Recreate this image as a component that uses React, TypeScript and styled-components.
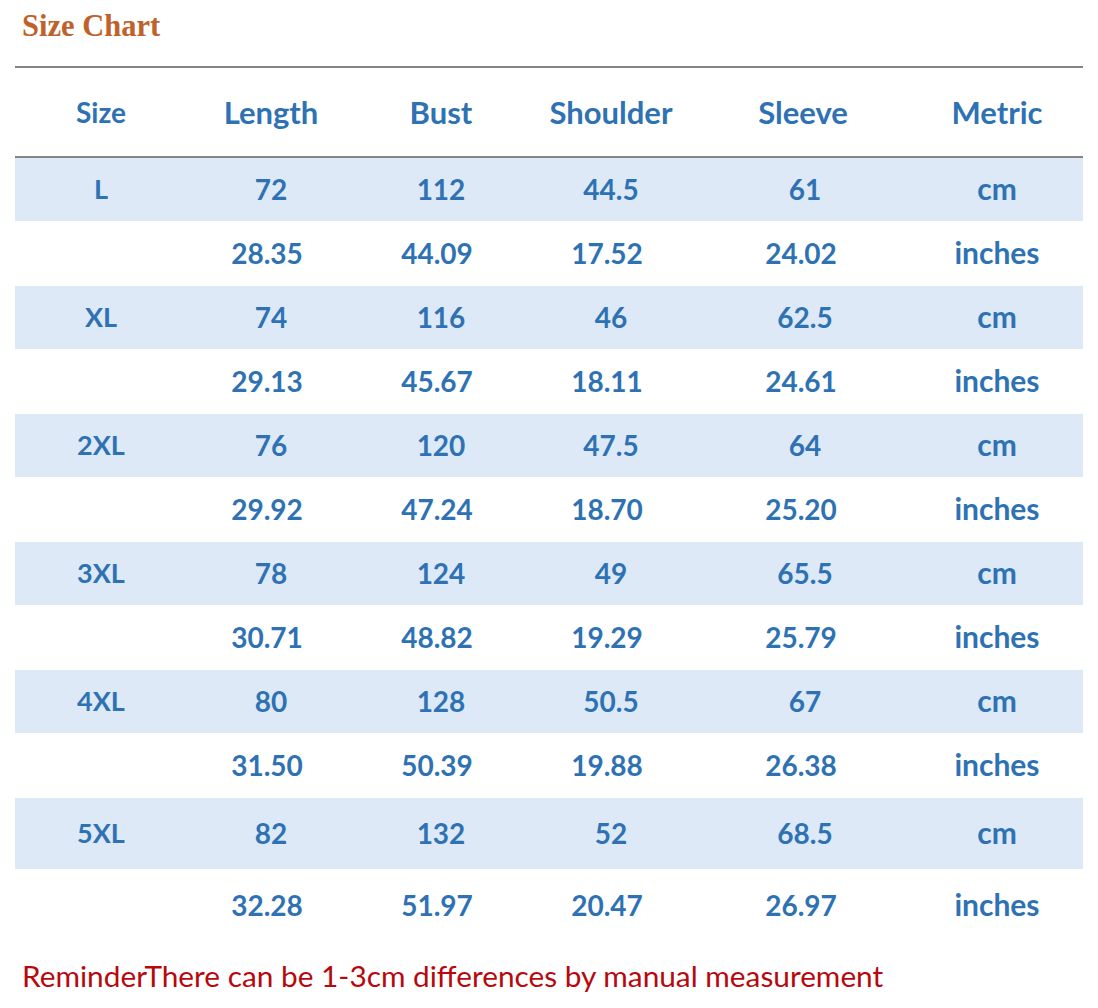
import React from 'react';
import { styled, createGlobalStyle } from 'styled-components';

const GlobalStyle = createGlobalStyle`
  html, body {
    margin: 0;
    padding: 0;
    background: #ffffff;
  }
`;

const Page = styled.div`
  width: 1098px;
  height: 1008px;
  box-sizing: border-box;
  padding: 9px 15px 0 15px;
  font-family: Lato, "Open Sans", sans-serif;
`;

const Title = styled.h1`
  margin: 0 0 0 7px;
  height: 57px;
  font-family: "Liberation Serif", serif;
  font-weight: 700;
  font-size: 30.5px;
  line-height: 35px;
  color: #c0612b;
`;

const Table = styled.div`
  width: 1068px;
  border-top: 2px solid #858585;
`;

const Row = styled.div<{ $band?: boolean; $height: number; $header?: boolean }>`
  display: grid;
  grid-template-columns: 172px 168px 172px 168px 216px 172px;
  align-items: center;
  height: ${({ $height }) => $height}px;
  background: ${({ $band }) => ($band ? '#dde9f6' : '#ffffff')};
  border-bottom: ${({ $header }) => ($header ? '2px solid #858585' : '1px solid #ffffff')};
  box-sizing: border-box;
`;

const Cell = styled.div<{ $shift?: number; $size?: number; $lift?: number }>`
  text-align: center;
  font-weight: 700;
  font-size: ${({ $size }) => $size ?? 28}px;
  color: #2e72b4;
  transform: translate(${({ $shift }) => $shift ?? 0}px, ${({ $lift }) => -($lift ?? 0)}px);
`;

const Reminder = styled.p`
  margin: 16px 0 0 7px;
  font-family: Lato, "Open Sans", sans-serif;
  font-size: 29.8px;
  color: #b8080e;
`;

const headers = ['Size', 'Length', 'Bust', 'Shoulder', 'Sleeve', 'Metric'];

const sizes = [
  { size: 'L', cm: ['72', '112', '44.5', '61'], inch: ['28.35', '44.09', '17.52', '24.02'] },
  { size: 'XL', cm: ['74', '116', '46', '62.5'], inch: ['29.13', '45.67', '18.11', '24.61'] },
  { size: '2XL', cm: ['76', '120', '47.5', '64'], inch: ['29.92', '47.24', '18.70', '25.20'] },
  { size: '3XL', cm: ['78', '124', '49', '65.5'], inch: ['30.71', '48.82', '19.29', '25.79'] },
  { size: '4XL', cm: ['80', '128', '50.5', '67'], inch: ['31.50', '50.39', '19.88', '26.38'] },
  { size: '5XL', cm: ['82', '132', '52', '68.5'], inch: ['32.28', '51.97', '20.47', '26.97'] },
];

const cmShift = [0, 0, 0, 2];
const inchShift = [-4, -4, -4, -2];

export default function App() {
  return (
    <>
      <GlobalStyle />
      <Page>
        <Title>Size Chart</Title>
        <Table>
          <Row $height={90} $header>
            {headers.map((h) => (
              <Cell key={h} $size={h === 'Size' ? 28 : 31}>{h}</Cell>
            ))}
          </Row>
          {sizes.map((s, idx) => {
            const last = idx === sizes.length - 1;
            return (
              <React.Fragment key={s.size}>
                <Row $band $height={last ? 72 : 64}>
                  <Cell $size={27} $lift={1}>{s.size}</Cell>
                  {s.cm.map((v, i) => (
                    <Cell key={i} $shift={cmShift[i]} $lift={1}>{v}</Cell>
                  ))}
                  <Cell $size={30} $lift={2}>cm</Cell>
                </Row>
                <Row $height={last ? 72 : 64}>
                  <Cell />
                  {s.inch.map((v, i) => (
                    <Cell key={i} $shift={inchShift[i]} $lift={1}>{v}</Cell>
                  ))}
                  <Cell $size={30} $lift={2}>inches</Cell>
                </Row>
              </React.Fragment>
            );
          })}
        </Table>
        <Reminder>ReminderThere can be 1-3cm differences by manual measurement</Reminder>
      </Page>
    </>
  );
}
